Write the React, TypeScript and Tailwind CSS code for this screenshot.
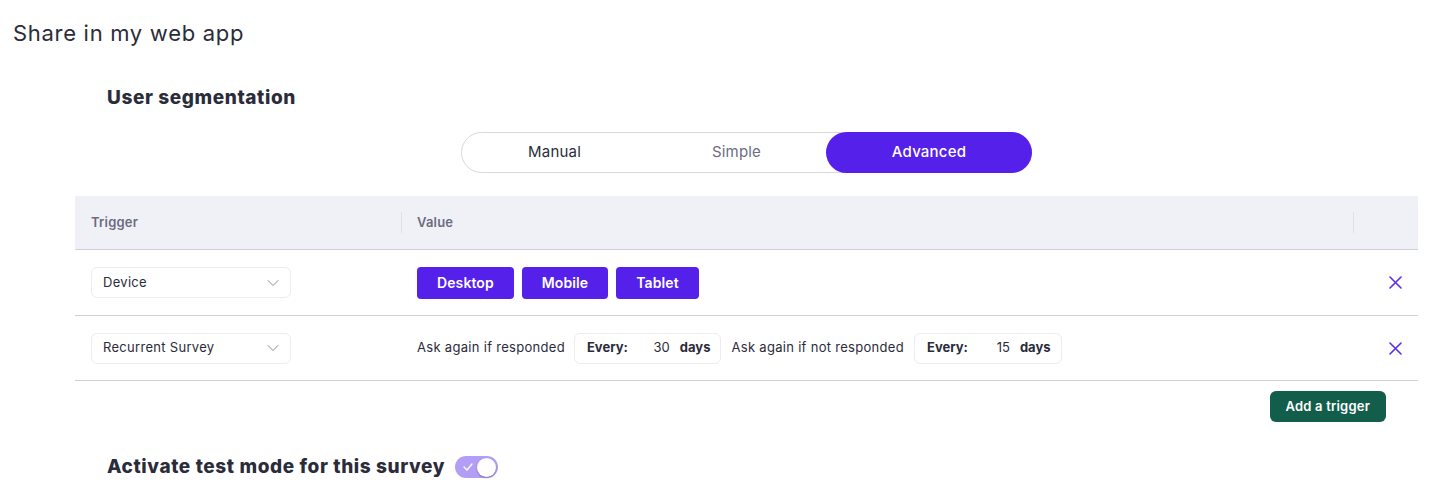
import React from "react";

const Chevron = () => (
  <svg width="12" height="8" viewBox="0 0 12 8" fill="none" className="text-[#8a8b9a]">
    <path d="M1 1.5l5 5 5-5" stroke="currentColor" strokeWidth="1" strokeLinecap="round" strokeLinejoin="round" />
  </svg>
);

const XIcon = () => (
  <svg width="13" height="13" viewBox="0 0 13 13" fill="none">
    <path d="M1 1l11 11M12 1L1 12" stroke="#5b2de8" strokeWidth="1.6" strokeLinecap="round" />
  </svg>
);

const Select = ({ label }: { label: string }) => (
  <div className="w-[200px] h-[31px] border border-[#ececf2] rounded-md flex items-center justify-between pl-[11px] pr-[11px] text-[13px] tracking-[0.3px] text-[#2b2c3a]">
    <span>{label}</span>
    <Chevron />
  </div>
);

const EveryBox = ({ n }: { n: string }) => (
  <div className="h-[31px] border border-[#ececf2] rounded-md flex items-center pl-[12px] pr-[10px] text-[13px] tracking-normal text-[#2b2c3a]">
    <span className="font-bold">Every:</span>
    <span className="ml-[20px] w-[22px] text-right">{n}</span>
    <span className="ml-[10px] font-bold">days</span>
  </div>
);

export default function App() {
  return (
    <div className="bg-white w-[1429px] h-[499px] overflow-hidden text-[#2b2c3a]" style={{ fontFamily: "Inter, 'Noto Sans', sans-serif" }}>
      <div className="pt-[19px] pl-[13px] text-[22px] leading-[28px] tracking-[0.7px] text-[#2b2c3a]">Share in my web app</div>
      <div className="ml-[75px] mr-[11px]">
        <div className="mt-[39px] pl-[32px] text-[19px] leading-[24px] font-extrabold tracking-[0.6px]">User segmentation</div>
        <div className="mt-[22px] flex justify-center">
          <div className="flex h-[41px] w-[571px] rounded-full border border-[#d8d8de] text-[15px] tracking-[0.2px]">
            <div className="w-[185px] flex items-center justify-center text-[#2b2c3a]">Manual</div>
            <div className="w-[179px] flex items-center justify-center text-[#6b6c80]">Simple</div>
            <div className="flex-1 -my-px -mr-px flex items-center justify-center rounded-full bg-[#5521ea] text-white font-medium">Advanced</div>
          </div>
        </div>
        <div className="mt-[23px]">
          <div className="grid grid-cols-[326px_1fr_65px] h-[54px] bg-[#f0f1f6] border-b border-[#cfd0d8] text-[13px] font-semibold tracking-[0.2px] text-[#6b6c80]">
            <div className="flex items-center px-4">Trigger</div>
            <div className="flex items-center px-4 relative">
              <div className="absolute left-0 top-[16px] h-[21px] w-px bg-[#dfe0e8]" />
              Value
            </div>
            <div className="relative">
              <div className="absolute left-0 top-[16px] h-[21px] w-px bg-[#dfe0e8]" />
            </div>
          </div>
          <div className="grid grid-cols-[326px_1fr_65px] h-[66px] border-b border-[#cfd0d8]">
            <div className="flex items-center px-4"><Select label="Device" /></div>
            <div className="flex items-center px-4 gap-2">
              {["Desktop", "Mobile", "Tablet"].map((t) => (
                <div key={t} className="h-[32px] px-[20px] rounded-[4px] bg-[#5521ea] text-white text-[14px] font-semibold tracking-[0.1px] flex items-center">{t}</div>
              ))}
            </div>
            <div className="flex items-center justify-end pr-[16px]"><XIcon /></div>
          </div>
          <div className="grid grid-cols-[326px_1fr_65px] h-[65px] border-b border-[#cfd0d8]">
            <div className="flex items-center px-4"><Select label="Recurrent Survey" /></div>
            <div className="flex items-center px-4 text-[13px] tracking-[0.3px]">
              <span>Ask again if responded</span>
              <div className="ml-[9px]"><EveryBox n="30" /></div>
              <span className="ml-[10px]">Ask again if not responded</span>
              <div className="ml-[10px]"><EveryBox n="15" /></div>
            </div>
            <div className="flex items-center justify-end pr-[16px]"><XIcon /></div>
          </div>
          <div className="flex justify-end mt-[10px] pr-[32px]">
            <div className="h-[31px] px-[16px] rounded-md bg-[#135e4b] text-white text-[13px] font-semibold tracking-[0.2px] flex items-center">Add a trigger</div>
          </div>
        </div>
        <div className="mt-[33px] pl-[32px] flex items-center gap-[10px]">
          <span className="text-[19px] leading-[24px] font-extrabold tracking-[0.6px]">Activate test mode for this survey</span>
          <div className="w-[43px] h-[22px] rounded-full bg-[#b39ef5] flex items-center justify-between pl-[8px] pr-[2px]">
            <svg width="10" height="8" viewBox="0 0 10 8" fill="none">
              <path d="M1 4l3 3 5-6" stroke="white" strokeWidth="1.3" strokeLinecap="round" strokeLinejoin="round" />
            </svg>
            <div className="w-[19px] h-[19px] rounded-full bg-white shadow-[0_1px_2px_rgba(0,0,0,0.3)]" />
          </div>
        </div>
      </div>
    </div>
  );
}
